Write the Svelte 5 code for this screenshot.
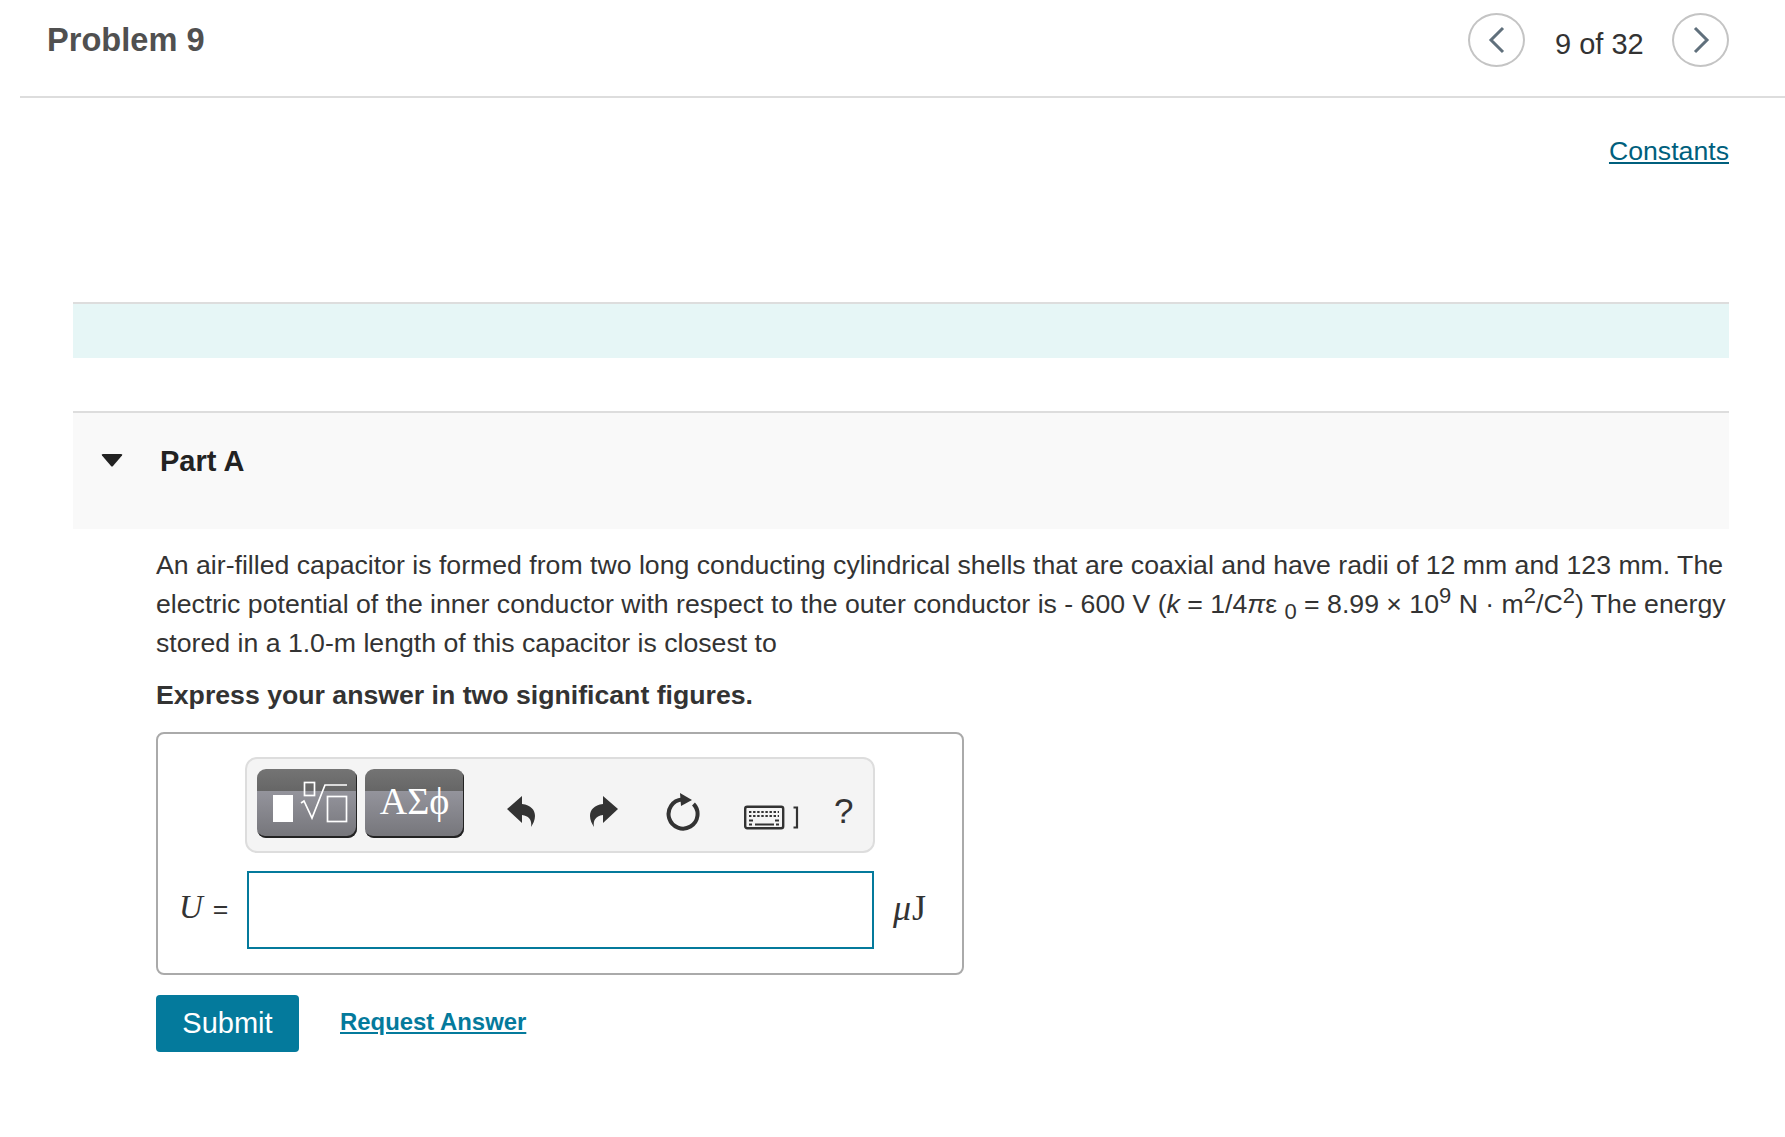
<script lang="ts">
  let answer = $state("");
</script>

<div class="page">
  <header class="top">
    <h1>Problem 9</h1>
    <nav class="pager">
      <button class="circle" aria-label="previous">
        <svg width="18" height="28" viewBox="0 0 18 28"><path d="M15 2 3 14l12 12" /></svg>
      </button>
      <span class="count">9 of 32</span>
      <button class="circle" aria-label="next">
        <svg width="18" height="28" viewBox="0 0 18 28"><path d="M3 2l12 12L3 26" /></svg>
      </button>
    </nav>
  </header>

  <main class="content">
    <div class="constants"><a href="#constants">Constants</a></div>
    <div class="band"></div>

    <section class="part">
      <div class="part-head">
        <svg class="caret" width="22" height="13" viewBox="0 0 22 13"><path d="M1 1.5Q0 0 2 0h18q2 0 1 1.5L12 12q-1 1-2 0z" /></svg>
        <h2>Part A</h2>
      </div>

      <div class="part-body">
        <p class="question">
          An air-filled capacitor is formed from two long conducting cylindrical shells that are coaxial and have radii of 12 mm and 123 mm. The electric potential of the inner conductor with respect to the outer conductor is - 600 V (<i>k</i> = 1/4<i>π</i>ε <sub>0</sub> = 8.99 × 10<sup>9</sup> N · m<sup>2</sup>/C<sup>2</sup>) The energy stored in a 1.0-m length of this capacitor is closest to
        </p>
        <p class="instruction">Express your answer in two significant figures.</p>

        <div class="answer-box">
          <div class="toolbar">
            <button class="tmpl" aria-label="templates">
              <svg width="100" height="69" viewBox="0 0 100 69">
                <rect x="16" y="26" width="20" height="27" fill="#fff" />
                <g fill="none" stroke="#fff" stroke-width="1.7">
                  <rect x="47.5" y="13.5" width="10" height="13" />
                  <rect x="70.5" y="27.5" width="19" height="25" />
                  <path d="M44 34l3-2 8 17 13-33h22" />
                </g>
              </svg>
            </button>
            <button class="tmpl greek">ΑΣϕ</button>

            <button class="tool undo" aria-label="undo">
              <svg width="28" height="32" viewBox="0 0 28 32"><path d="M0 13 15 0v8c9 1 13 6 13 12 0 4-2 8-4 11 1-6-1-11-9-12v8z" /></svg>
            </button>
            <button class="tool redo" aria-label="redo">
              <svg width="28" height="32" viewBox="0 0 28 32"><path d="M28 13 13 0v8C4 9 0 14 0 20c0 4 2 8 4 11-1-6 1-11 9-12v8z" /></svg>
            </button>
            <button class="tool reload" aria-label="reset">
              <svg width="34" height="39" viewBox="0 0 34 39">
                <path class="ring" d="M16 7.6A14.5 14.5 0 1 0 27.5 12" />
                <path class="head" d="M14 1l12 7-11 6z" />
              </svg>
            </button>
            <button class="tool keys" aria-label="keyboard">
              <svg width="56" height="25" viewBox="0 0 56 25">
                <rect x="1.2" y="1.7" width="38" height="21.6" rx="2" fill="none" stroke="#333" stroke-width="2.4" />
                <path d="M5 7h30M5 11h30" stroke="#333" stroke-width="2.2" stroke-dasharray="2.4 1.7" />
                <path d="M5 15.5h4M31 15.5h4M5 19.5h3M11 19.5h19M32 19.5h3" stroke="#333" stroke-width="2.2" />
                <path d="M49.5 2.5h3.5v20h-3.5" fill="none" stroke="#333" stroke-width="2.2" />
              </svg>
            </button>
            <span class="help">?</span>
          </div>

          <div class="input-row">
            <span class="label"><i>U</i><span class="eq">=</span></span>
            <input class="entry" bind:value={answer} aria-label="U" />
            <span class="unit"><i>μ</i>J</span>
          </div>
        </div>

        <div class="actions">
          <button class="submit">Submit</button>
          <a class="request" href="#answer">Request Answer</a>
        </div>
      </div>
    </section>
  </main>
</div>

<style>
  :global(body) {
    background: #fff;
    font-family: "Liberation Sans", Arial, sans-serif;
    color: #333;
  }
  .page {
    height: 1137px;
    overflow: hidden;
  }
  .top {
    height: 96px;
    margin-left: 20px;
    padding: 0 56px 0 27px;
    border-bottom: 2px solid #ddd;
    display: flex;
    justify-content: space-between;
    align-items: flex-start;
  }
  h1 {
    margin: 20px 0 0;
    font-size: 32.6px;
    line-height: 40px;
    color: #505050;
  }
  .pager {
    display: flex;
    align-items: flex-start;
    margin-top: 13px;
  }
  .circle {
    width: 57px;
    height: 54px;
    padding: 0;
    border: 2px solid #c4c4c4;
    border-radius: 50%;
    background: #fff;
    display: flex;
    align-items: center;
    justify-content: center;
  }
  .circle path {
    fill: none;
    stroke: #60707c;
    stroke-width: 3;
  }
  .count {
    width: 88px;
    margin: 0 29px 0 30px;
    font-size: 29px;
    line-height: 62px;
    white-space: nowrap;
  }
  .content {
    margin: 0 56px 0 73px;
  }
  .constants {
    padding-top: 34px;
    height: 171px;
    box-sizing: border-box;
    text-align: right;
    font-size: 26.67px;
    line-height: 39px;
    margin-bottom: 33px;
  }
  .constants a {
    color: #005f7d;
  }
  .band {
    height: 54px;
    background: #e6f6f6;
    border-top: 2px solid #ddd;
  }
  .part {
    margin-top: 53px;
  }
  .part-head {
    height: 116px;
    background: #f9f9f9;
    border-top: 2px solid #ddd;
    display: flex;
    align-items: flex-start;
    padding-left: 28px;
  }
  .caret {
    margin-top: 41px;
    fill: #222;
  }
  h2 {
    margin: 28px 0 0 37px;
    font-size: 29px;
    line-height: 40px;
    color: #222;
  }
  .part-body {
    padding: 17px 0 0 83px;
  }
  .question,
  .instruction {
    margin: 0;
    font-size: 26.67px;
    line-height: 39px;
  }
  sub,
  sup {
    font-size: 22px;
    line-height: 0;
  }
  .instruction {
    margin-top: 13px;
    font-weight: bold;
  }
  .answer-box {
    width: 808px;
    height: 243px;
    box-sizing: border-box;
    margin-top: 17px;
    border: 2px solid #aaa;
    border-radius: 8px;
    padding: 23px 0 0 87px;
  }
  .toolbar {
    width: 630px;
    height: 96px;
    box-sizing: border-box;
    background: #f4f4f4;
    border: 2px solid #ddd;
    border-radius: 12px;
    display: flex;
    align-items: flex-start;
    padding: 10px 0 0 10px;
  }
  button {
    font-family: inherit;
  }
  .tmpl {
    width: 100px;
    height: 69px;
    padding: 0;
    border: none;
    border-radius: 9px;
    margin-right: 8px;
    box-shadow: inset -1px -2px 0 #222;
    background: linear-gradient(#747474 0, #666 32%, #94949c 32%, #75757a 100%);
    overflow: hidden;
  }
  .greek {
    width: 99px;
    font-family: "Liberation Serif", serif;
    font-size: 38px;
    line-height: 52px;
    color: #fff;
    text-align: center;
    display: block;
    padding-bottom: 6px;
  }
  .tool {
    padding: 0;
    border: none;
    background: none;
    display: block;
  }
  .undo path,
  .redo path {
    fill: #333;
  }
  .undo {
    margin: 27px 0 0 35px;
  }
  .redo {
    margin: 27px 0 0 55px;
  }
  .reload {
    margin: 23px 0 0 48px;
  }
  .ring {
    fill: none;
    stroke: #333;
    stroke-width: 4;
  }
  .head {
    fill: #333;
  }
  .keys {
    margin: 36px 0 0 44px;
  }
  .help {
    margin: 17px 0 0 34px;
    font-size: 35px;
    line-height: 50px;
  }
  .input-row {
    display: flex;
    align-items: flex-start;
    margin: 18px 0 0 -68px;
  }
  .label {
    width: 68px;
    padding-left: 2px;
    font-family: "Liberation Serif", serif;
    font-size: 33px;
    line-height: 72px;
    white-space: nowrap;
  }
  .eq {
    font-family: "Liberation Sans", sans-serif;
    font-size: 26.67px;
    margin-left: 10px;
  }
  .entry {
    width: 627px;
    height: 78px;
    box-sizing: border-box;
    border: 2px solid #047a9c;
    outline: none;
    background: #fff;
  }
  .unit {
    margin-left: 19px;
    font-family: "Liberation Serif", serif;
    font-size: 36px;
    line-height: 74px;
    letter-spacing: 1px;
    color: #333;
  }
  .actions {
    display: flex;
    align-items: center;
    margin-top: 20px;
  }
  .submit {
    width: 143px;
    height: 57px;
    padding: 0;
    border: none;
    border-radius: 4px;
    background: #047a9c;
    color: #fff;
    font-size: 29px;
  }
  .request {
    margin: 0 0 4px 41px;
    font-size: 23.9px;
    font-weight: bold;
    color: #047a9c;
  }
</style>
